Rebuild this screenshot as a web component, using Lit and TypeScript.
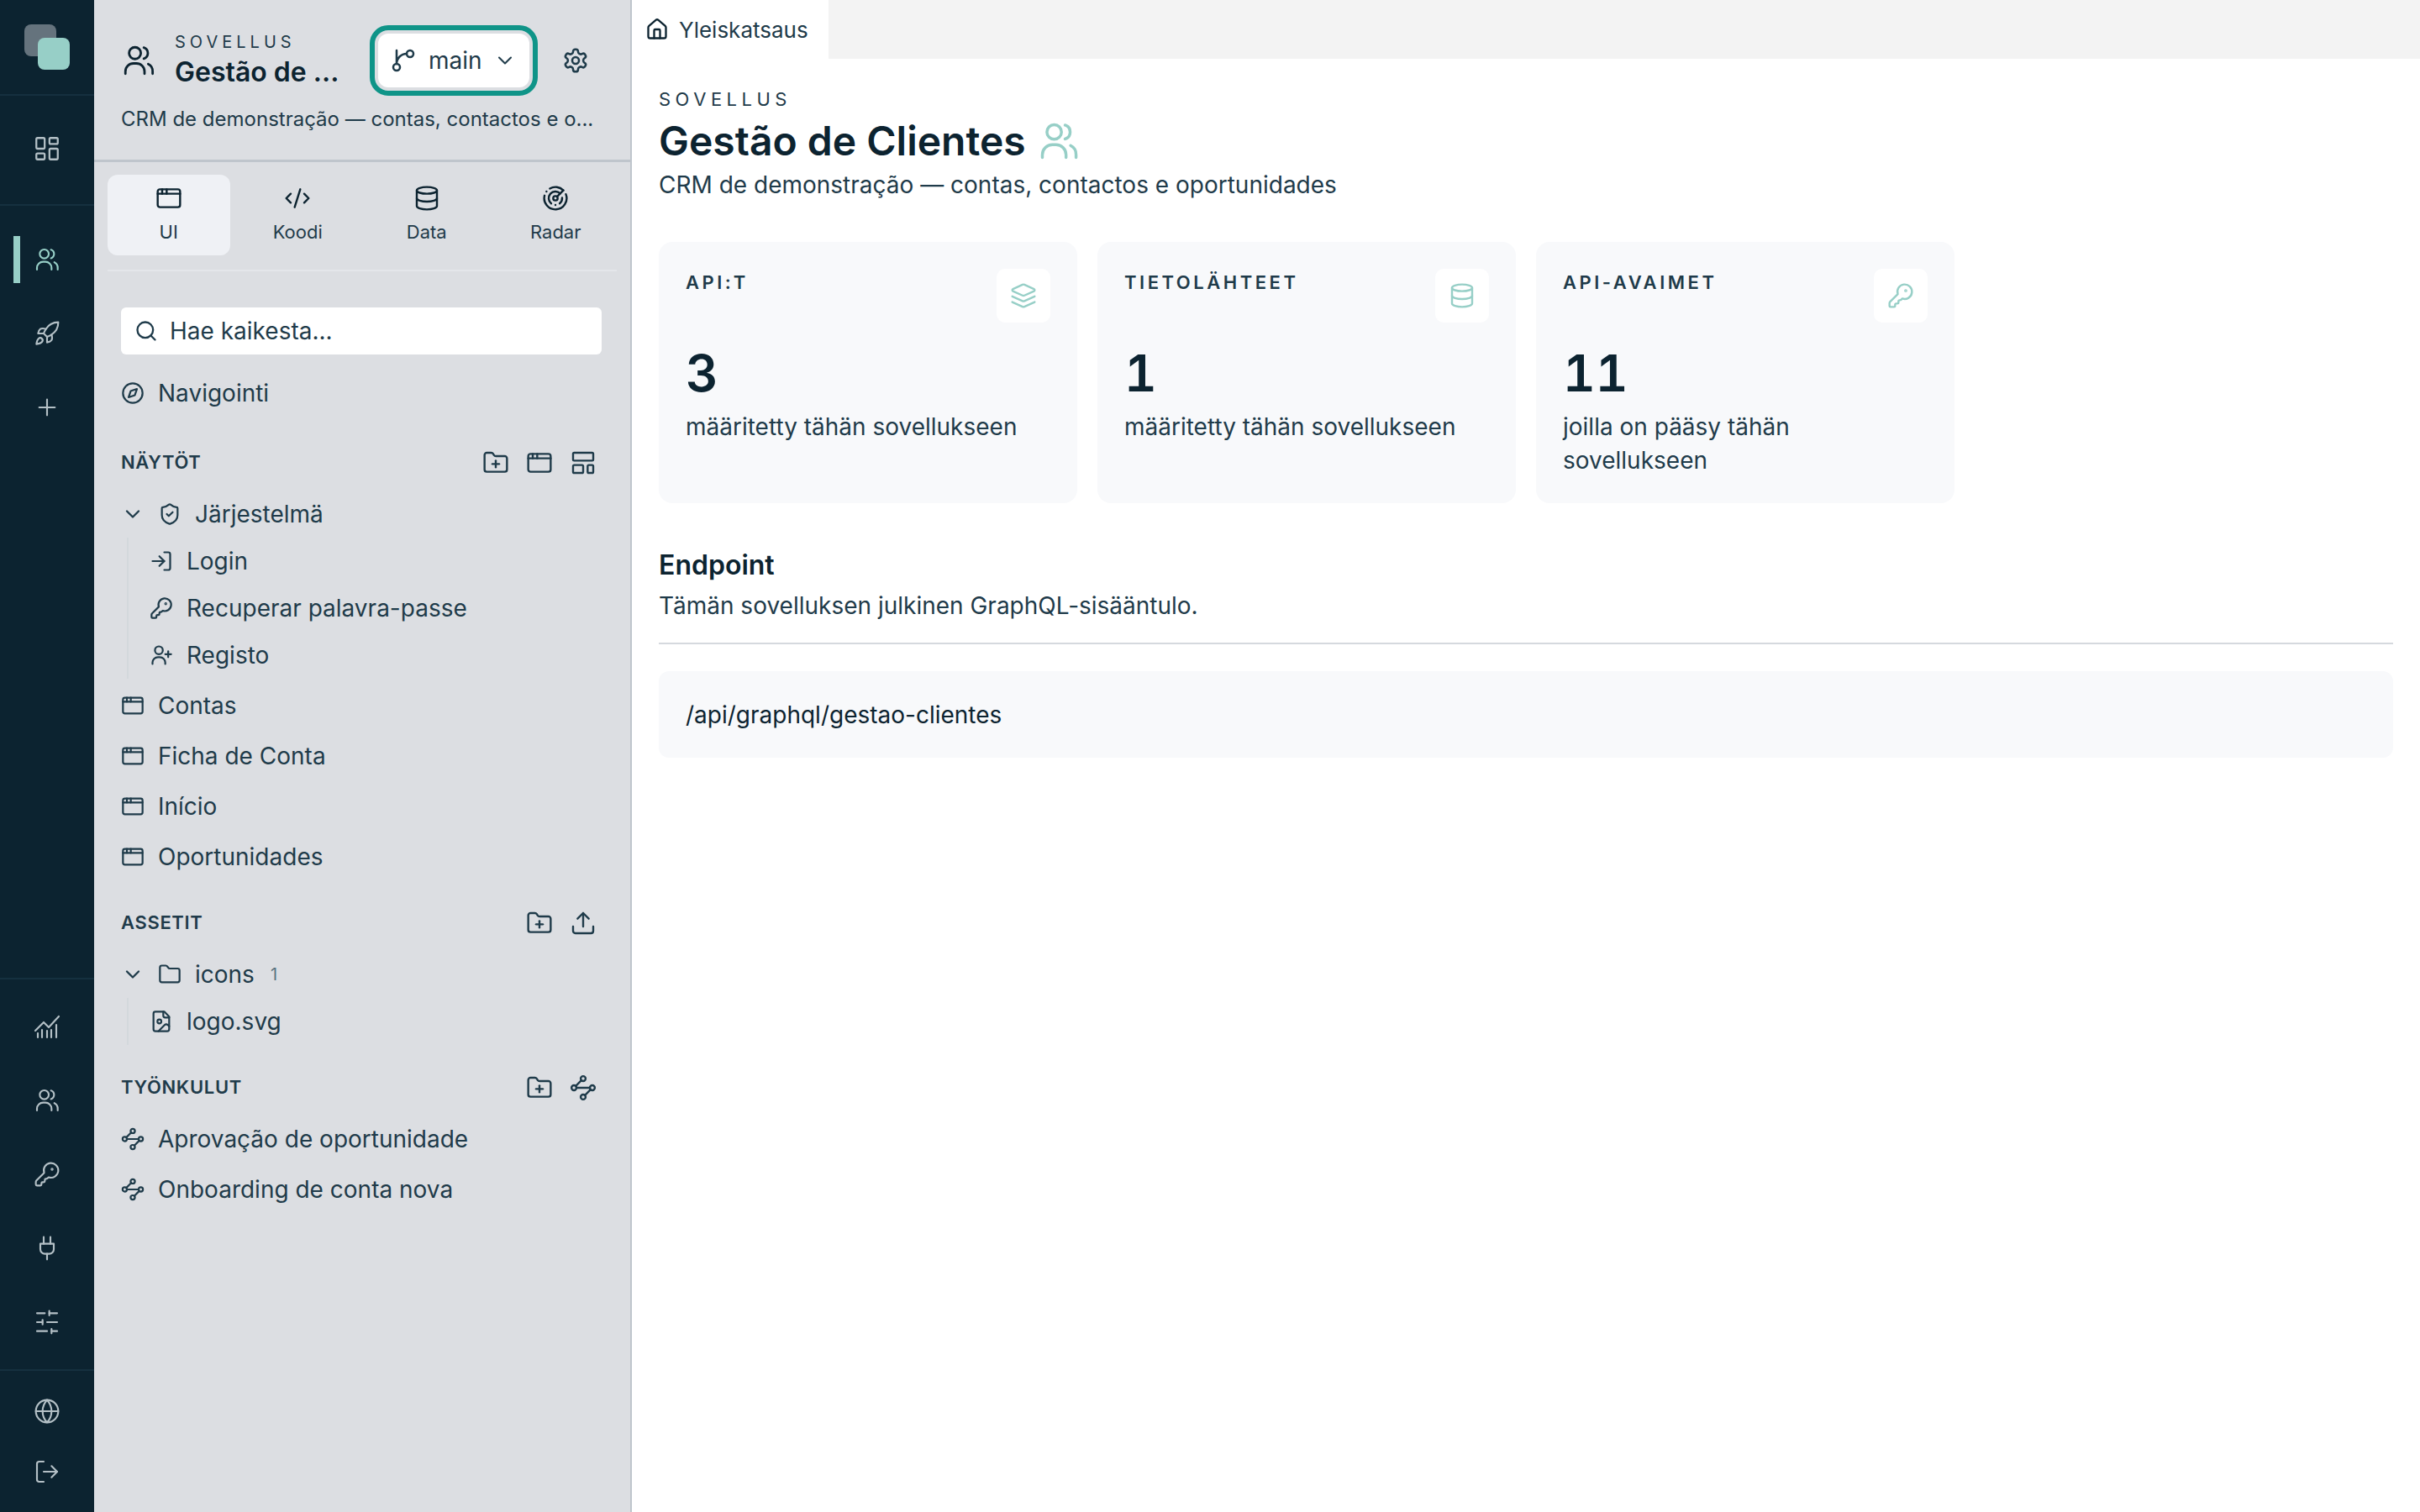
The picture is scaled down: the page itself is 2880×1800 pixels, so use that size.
import { LitElement, html, css, svg } from "lit";
import { customElement } from "lit/decorators.js";

const ICONS: Record<string, unknown> = {
  dashboard: svg`<rect x="3" y="3" width="7" height="9" rx="1"/><rect x="14" y="3" width="7" height="5" rx="1"/><rect x="14" y="12" width="7" height="9" rx="1"/><rect x="3" y="16" width="7" height="5" rx="1"/>`,
  users: svg`<circle cx="9.5" cy="7" r="4"/><path d="M3 21v-1.5a5.5 5.5 0 0 1 5.5-5.5h2a5.5 5.5 0 0 1 5.5 5.5V21"/><path d="M15.5 3.2a4 4 0 0 1 0 7.6"/><path d="M18.5 14.4A5.5 5.5 0 0 1 21.5 19.5V21"/>`,
  rocket: svg`<path d="M4.5 16.5c-1.5 1.26-2 5-2 5s3.74-.5 5-2c.71-.84.7-2.13-.09-2.91a2.18 2.18 0 0 0-2.91-.09z"/><path d="m12 15-3-3a22 22 0 0 1 2-3.95A12.88 12.88 0 0 1 22 2c0 2.72-.78 7.5-6 11a22.35 22.35 0 0 1-4 2z"/><path d="M9 12H4s.55-3.03 2-4c1.62-1.08 5 0 5 0"/><path d="M12 15v5s3.03-.55 4-2c1.08-1.62 0-5 0-5"/>`,
  plus: svg`<path d="M5 12h14"/><path d="M12 5v14"/>`,
  analytics: svg`<path d="M1.5 15.75 9 8.25l4.5 4.5L22.5 3"/><path d="M3.75 21.75V18"/><path d="M7.5 21.75V15"/><path d="M12 21.75V15.75"/><path d="M15.75 21.75V15"/><path d="M20.25 21.75V10.5"/>`,
  key: svg`<path d="M2.586 17.414A2 2 0 0 0 2 18.828V21a1 1 0 0 0 1 1h3a1 1 0 0 0 1-1v-1a1 1 0 0 1 1-1h1a1 1 0 0 0 1-1v-1a1 1 0 0 1 1-1h.172a2 2 0 0 0 1.414-.586l.814-.814a6.5 6.5 0 1 0-4-4z"/><circle cx="16.5" cy="7.5" r=".5"/>`,
  plug: svg`<path d="M12 22v-5"/><path d="M9 8V2"/><path d="M15 8V2"/><path d="M18 8v5a4 4 0 0 1-4 4h-4a4 4 0 0 1-4-4V8Z"/>`,
  sliders: svg`<path d="M21 4h-7"/><path d="M10 4H3"/><path d="M21 12h-9"/><path d="M8 12H3"/><path d="M21 20h-5"/><path d="M12 20H3"/><path d="M14 2v4"/><path d="M8 10v4"/><path d="M16 18v4"/>`,
  globe: svg`<circle cx="12" cy="12" r="10"/><path d="M12 2a14.5 14.5 0 0 0 0 20 14.5 14.5 0 0 0 0-20"/><path d="M2 12h20"/>`,
  logout: svg`<path d="M9 21H5a2 2 0 0 1-2-2V5a2 2 0 0 1 2-2h4"/><path d="m16 17 5-5-5-5"/><path d="M21 12H9"/>`,
  branch: svg`<path d="M15 6a9 9 0 0 0-9 9V3"/><circle cx="18" cy="6" r="3"/><circle cx="6" cy="18" r="3"/>`,
  chevron: svg`<path d="m6 9 6 6 6-6"/>`,
  gear: svg`<path d="M12.22 2h-.44a2 2 0 0 0-2 2v.18a2 2 0 0 1-1 1.73l-.43.25a2 2 0 0 1-2 0l-.15-.08a2 2 0 0 0-2.73.73l-.22.38a2 2 0 0 0 .73 2.73l.15.1a2 2 0 0 1 1 1.72v.51a2 2 0 0 1-1 1.74l-.15.09a2 2 0 0 0-.73 2.73l.22.38a2 2 0 0 0 2.73.73l.15-.08a2 2 0 0 1 2 0l.43.25a2 2 0 0 1 1 1.73V20a2 2 0 0 0 2 2h.44a2 2 0 0 0 2-2v-.18a2 2 0 0 1 1-1.73l.43-.25a2 2 0 0 1 2 0l.15.08a2 2 0 0 0 2.73-.73l.22-.39a2 2 0 0 0-.73-2.73l-.15-.08a2 2 0 0 1-1-1.74v-.5a2 2 0 0 1 1-1.74l.15-.09a2 2 0 0 0 .73-2.73l-.22-.38a2 2 0 0 0-2.73-.73l-.15.08a2 2 0 0 1-2 0l-.43-.25a2 2 0 0 1-1-1.73V4a2 2 0 0 0-2-2z"/><circle cx="12" cy="12" r="3"/>`,
  window: svg`<rect x="2" y="4" width="20" height="16" rx="2"/><path d="M10 4v4"/><path d="M2 8h20"/><path d="M6 4v4"/>`,
  code: svg`<path d="m18 16 4-4-4-4"/><path d="m6 8-4 4 4 4"/><path d="m14.5 4-5 16"/>`,
  database: svg`<ellipse cx="12" cy="5" rx="9" ry="3"/><path d="M3 5V19A9 3 0 0 0 21 19V5"/><path d="M3 12A9 3 0 0 0 21 12"/>`,
  radar: svg`<path d="M19.07 4.93A10 10 0 0 0 6.99 3.34"/><path d="M4 6h.01"/><path d="M2.29 9.62A10 10 0 1 0 21.31 8.35"/><path d="M16.24 7.76A6 6 0 1 0 8.23 16.67"/><path d="M12 18h.01"/><path d="M17.99 11.66A6 6 0 0 1 15.77 16.67"/><circle cx="12" cy="12" r="2"/><path d="m13.41 10.59 5.66-5.66"/>`,
  search: svg`<circle cx="11" cy="11" r="8"/><path d="m21 21-4.3-4.3"/>`,
  compass: svg`<circle cx="12" cy="12" r="10"/><path d="m16.24 7.76-2.12 6.36-6.36 2.12 2.12-6.36 6.36-2.12z"/>`,
  folderplus: svg`<path d="M12 10v6"/><path d="M9 13h6"/><path d="M20 20a2 2 0 0 0 2-2V8a2 2 0 0 0-2-2h-7.9a2 2 0 0 1-1.69-.9L9.6 3.9A2 2 0 0 0 7.93 3H4a2 2 0 0 0-2 2v13a2 2 0 0 0 2 2Z"/>`,
  folder: svg`<path d="M20 20a2 2 0 0 0 2-2V8a2 2 0 0 0-2-2h-7.9a2 2 0 0 1-1.69-.9L9.6 3.9A2 2 0 0 0 7.93 3H4a2 2 0 0 0-2 2v13a2 2 0 0 0 2 2Z"/>`,
  layout: svg`<rect x="3" y="3" width="18" height="7" rx="1"/><rect x="3" y="14" width="9" height="7" rx="1"/><rect x="16" y="14" width="5" height="7" rx="1"/>`,
  shield: svg`<path d="M20 13c0 5-3.5 7.5-7.66 8.95a1 1 0 0 1-.67-.01C7.5 20.5 4 18 4 13V6a1 1 0 0 1 1-1c2 0 4.5-1.2 6.24-2.72a1.17 1.17 0 0 1 1.52 0C14.51 3.81 17 5 19 5a1 1 0 0 1 1 1z"/><path d="m9 12 2 2 4-4"/>`,
  login: svg`<path d="M15 3h4a2 2 0 0 1 2 2v14a2 2 0 0 1-2 2h-4"/><path d="m10 17 5-5-5-5"/><path d="M15 12H3"/>`,
  userplus: svg`<circle cx="9.5" cy="7" r="4"/><path d="M3 21v-1.5a5.5 5.5 0 0 1 5.5-5.5h2a5.5 5.5 0 0 1 5.5 5.5V21"/><path d="M19 8v6"/><path d="M22 11h-6"/>`,
  upload: svg`<path d="M21 15v4a2 2 0 0 1-2 2H5a2 2 0 0 1-2-2v-4"/><path d="m17 8-5-5-5 5"/><path d="M12 3v12"/>`,
  fileimage: svg`<path d="M15 2H6a2 2 0 0 0-2 2v16a2 2 0 0 0 2 2h12a2 2 0 0 0 2-2V7Z"/><path d="M14 2v4a2 2 0 0 0 2 2h4"/><circle cx="10" cy="12" r="2"/><path d="m20 17-1.296-1.296a2.41 2.41 0 0 0-3.408 0L9 22"/>`,
  waypoints: svg`<circle cx="12" cy="3.8" r="2.2"/><path d="M10.4 5.4 5.4 10.4"/><circle cx="3.8" cy="12" r="2.2"/><path d="M6 12h12"/><circle cx="20.2" cy="12" r="2.2"/><path d="M13.6 18.6 18.6 13.6"/><circle cx="12" cy="20.2" r="2.2"/>`,
  layers: svg`<path d="m12.83 2.18a2 2 0 0 0-1.66 0L2.6 6.08a1 1 0 0 0 0 1.83l8.58 3.91a2 2 0 0 0 1.66 0l8.58-3.9a1 1 0 0 0 0-1.83Z"/><path d="m22 17.65-9.17 4.16a2 2 0 0 1-1.66 0L2 17.65"/><path d="m22 12.65-9.17 4.16a2 2 0 0 1-1.66 0L2 12.65"/>`,
  home: svg`<path d="M15 21v-8a1 1 0 0 0-1-1h-4a1 1 0 0 0-1 1v8"/><path d="M3 10a2 2 0 0 1 .709-1.528l7-5.999a2 2 0 0 1 2.582 0l7 5.999A2 2 0 0 1 21 10v9a2 2 0 0 1-2 2H5a2 2 0 0 1-2-2z"/>`,
};

const icon = (name: string, cls = "") =>
  html`<svg class="ic ${cls}" viewBox="0 0 24 24" fill="none" stroke="currentColor" stroke-width="2" stroke-linecap="round" stroke-linejoin="round">${ICONS[name]}</svg>`;

@customElement("app-root")
export class AppRoot extends LitElement {
  static styles = css`
    :host { display: flex; width: 2880px; height: 1800px; overflow: hidden; background: #fff; color: #0c2330; font-family: Inter, "Liberation Sans", sans-serif; }
    * { box-sizing: border-box; }
    .ic { display: block; flex: none; width: 28px; height: 28px; }

    .rail { width: 112px; flex: none; background: #0c2330; color: #b4c0c6; display: flex; flex-direction: column; }
    .logo { height: 112px; flex: none; position: relative; }
    .logo i { position: absolute; width: 38px; height: 38px; border-radius: 8px; }
    .logo .a { left: 29px; top: 29px; background: #65737d; }
    .logo .b { left: 45px; top: 45px; background: #97cfc7; }
    .rsec { border-top: 2px solid #15303f; flex: none; }
    .rsec.top { height: 131px; display: flex; align-items: center; justify-content: center; padding-bottom: 4px; }
    .rsec.top .ic { width: 34px; height: 34px; stroke-width: 1.6; }
    .rsec.apps { padding-top: 20px; flex: 1; }
    .rsec.tools { padding: 12px 0; }
    .rsec.foot { padding: 12px 0; }
    .ri { height: 88px; display: flex; align-items: center; justify-content: center; position: relative; }
    .foot .ri { height: 72px; }
    .ri .ic { width: 32px; height: 32px; stroke-width: 1.6; }
    .ri.on { color: #97cfc7; }
    .ri.on::before { content: ""; position: absolute; left: 16px; top: 16px; width: 8px; height: 56px; background: #97cfc7; }

    .panel { width: 640px; flex: none; background: #dcdee2; border-right: 2px solid #bfc5cc; color: #1f3b4a; display: flex; flex-direction: column; }
    .phead { height: 193px; flex: none; border-bottom: 3px solid #bfc5cc; padding: 30px 32px 0 34px; }
    .prow { display: flex; align-items: center; height: 83px; }
    .pic { width: 42px; height: 42px; color: #0c2330; stroke-width: 1.6; margin-left: -2px; }
    .ptext { margin-left: 22px; width: 200px; flex: none; }
    .eyebrow { font-size: 20px; letter-spacing: 0.25em; line-height: 26px; color: #1f3b4a; }
    .ptitle { font-size: 32px; font-weight: 600; line-height: 42px; color: #0c2330; white-space: nowrap; margin-top: 2px; }
    .branch { margin-left: 42px; width: 180px; height: 64px; flex: none; background: #fff; border-radius: 12px; outline: 6px solid #0f9488; outline-offset: 4px; display: flex; align-items: center; padding-left: 14px; font-size: 28px; color: #1f3b4a; }
    .branch .ic { width: 32px; height: 32px; stroke-width: 1.9; }
    .branch span { margin: 0 13px 0 14px; }
    .branch .chev { width: 28px; height: 28px; stroke-width: 1.8; }
    .gear { margin-left: 39px; width: 32px; height: 32px; color: #1f3b4a; stroke-width: 1.9; }
    .pdesc { margin-top: 12px; margin-left: -2px; font-size: 24px; line-height: 34px; white-space: nowrap; }

    .tabs { margin: 15px 16px 0; height: 115px; padding-bottom: 17px; border-bottom: 2px solid #e4e6ea; display: grid; grid-template-columns: repeat(4, 1fr); gap: 8px; flex: none; }
    .tab { border-radius: 12px; display: flex; flex-direction: column; align-items: center; padding-top: 12px; font-size: 22px; line-height: 30px; gap: 9px; }
    .tab.on { background: #eff1f5; }
    .tab .ic { width: 32px; height: 32px; stroke-width: 1.8; color: #0c2330; }

    .tree { padding: 43px 34px 0 32px; flex: 1; }
    .search { width: 572px; height: 56px; background: #fff; border-radius: 6px; display: flex; align-items: center; padding-left: 16px; gap: 14px; font-size: 28px; }
    .search .ic { width: 28px; height: 28px; }
    .row { height: 60px; display: flex; align-items: center; gap: 16px; font-size: 28px; white-space: nowrap; margin-left: 1px; }
    .row.top { margin-top: 16px; }
    .row .ic { width: 28px; height: 28px; stroke-width: 1.9; margin-left: -1px; }
    .group { height: 56px; display: flex; align-items: center; font-size: 28px; margin-top: 12px; }
    .group .chev { width: 28px; height: 28px; margin-right: 16px; }
    .group .gi { width: 28px; height: 28px; margin-right: 16px; stroke-width: 1.9; }
    .count { font-size: 20px; color: #5b7380; margin-left: 19px; }
    .kids { margin: 0 0 0 7px; border-left: 2px solid #d3d8dc; padding-left: 25px; }
    .kids.mb { margin-bottom: 2px; }
    .kid { height: 56px; display: flex; align-items: center; gap: 16px; font-size: 28px; white-space: nowrap; }
    .kid .ic { width: 28px; height: 28px; stroke-width: 1.9; }
    .sh { height: 44px; display: flex; align-items: center; justify-content: space-between; font-size: 22px; font-weight: 600; letter-spacing: 0.03em; margin-top: 30px; padding-right: 6px; }
    .sh.assets { margin-top: 26px; }
    .sh.flows { margin-top: 28px; }
    .sh div { display: flex; gap: 20px; }
    .sh .ic { width: 32px; height: 32px; stroke-width: 1.8; margin-top: 2px; }
    .row.after { margin-top: 10px; }

    .main { flex: 1; min-width: 0; display: flex; flex-direction: column; }
    .tabbar { height: 70px; flex: none; background: #f3f3f3; display: flex; }
    .doc { width: 234px; background: #fff; display: flex; align-items: center; padding-left: 16px; gap: 12px; font-size: 26px; color: #1f3b4a; }
    .doc .ic { color: #0c2330; }
    .content { padding: 32px 32px 0; }
    .ceyebrow { font-size: 22px; letter-spacing: 0.25em; line-height: 32px; color: #1f3b4a; }
    .h1 { display: flex; align-items: center; gap: 13px; font-size: 48px; font-weight: 600; line-height: 66px; margin-top: 1px; }
    .h1 .ic { width: 52px; height: 52px; color: #97cfc7; stroke-width: 1.6; }
    .sub { font-size: 28px; line-height: 38px; color: #1f3b4a; }
    .cards { margin-top: 49px; display: flex; gap: 24px; }
    .card { width: 498px; height: 311px; background: #f8f9fb; border-radius: 16px; padding: 32px; position: relative; }
    .label { font-size: 22px; font-weight: 600; letter-spacing: 0.16em; line-height: 32px; color: #1f3b4a; }
    .tile { position: absolute; right: 32px; top: 32px; width: 64px; height: 64px; background: #fff; border-radius: 10px; display: flex; align-items: center; justify-content: center; color: #97cfc7; }
    .tile .ic { width: 32px; height: 32px; stroke-width: 1.8; }
    .num { margin-top: 56px; font-size: 60px; font-weight: 600; line-height: 72px; color: #0c2330; font-variant-numeric: tabular-nums; }
    .cdesc { margin-top: 8px; font-size: 28px; line-height: 40px; color: #1f3b4a; max-width: 340px; }
    .card.wide .cdesc { max-width: none; }
    .h2 { margin-top: 52px; font-size: 32px; font-weight: 600; line-height: 44px; }
    .sub2 { font-size: 28px; line-height: 40px; margin-top: 6px; color: #1f3b4a; }
    .hr { height: 2px; background: #d5d9de; margin-top: 24px; }
    .codebox { margin-top: 32px; height: 103px; background: #f8f9fb; border-radius: 12px; padding-left: 32px; display: flex; align-items: center; font-size: 28px; color: #0c2330; }
  `;

  private railItem(name: string, on = false) {
    return html`<div class="ri ${on ? "on" : ""}">${icon(name)}</div>`;
  }

  private card(label: string, ic: string, num: string, desc: string, wide = true) {
    return html`<div class="card ${wide ? "wide" : ""}">
      <div class="label">${label}</div>
      <div class="tile">${icon(ic)}</div>
      <div class="num">${num}</div>
      <div class="cdesc">${desc}</div>
    </div>`;
  }

  render() {
    const kid = (i: string, t: string) => html`<div class="kid">${icon(i)}<span>${t}</span></div>`;
    const row = (i: string, t: string, c = "") => html`<div class="row ${c}">${icon(i)}<span>${t}</span></div>`;
    return html`
      <nav class="rail">
        <div class="logo"><i class="a"></i><i class="b"></i></div>
        <div class="rsec top">${icon("dashboard")}</div>
        <div class="rsec apps">${this.railItem("users", true)}${this.railItem("rocket")}${this.railItem("plus")}</div>
        <div class="rsec tools">${this.railItem("analytics")}${this.railItem("users")}${this.railItem("key")}${this.railItem("plug")}${this.railItem("sliders")}</div>
        <div class="rsec foot">${this.railItem("globe")}${this.railItem("logout")}</div>
      </nav>
      <aside class="panel">
        <header class="phead">
          <div class="prow">
            ${icon("users", "pic")}
            <div class="ptext">
              <div class="eyebrow">SOVELLUS</div>
              <div class="ptitle">Gestão de ...</div>
            </div>
            <div class="branch">${icon("branch")}<span>main</span>${icon("chevron", "chev")}</div>
            ${icon("gear", "gear")}
          </div>
          <div class="pdesc">CRM de demonstração — contas, contactos e o...</div>
        </header>
        <div class="tabs">
          <div class="tab on">${icon("window")}UI</div>
          <div class="tab">${icon("code")}Koodi</div>
          <div class="tab">${icon("database")}Data</div>
          <div class="tab">${icon("radar")}Radar</div>
        </div>
        <div class="tree">
          <div class="search">${icon("search")}<span>Hae kaikesta...</span></div>
          ${row("compass", "Navigointi", "top")}
          <div class="sh"><span>NÄYTÖT</span><div>${icon("folderplus")}${icon("window")}${icon("layout")}</div></div>
          <div class="group">${icon("chevron", "chev")}${icon("shield", "gi")}<span>Järjestelmä</span></div>
          <div class="kids mb">${kid("login", "Login")}${kid("key", "Recuperar palavra-passe")}${kid("userplus", "Registo")}</div>
          ${row("window", "Contas")}${row("window", "Ficha de Conta")}${row("window", "Início")}${row("window", "Oportunidades")}
          <div class="sh assets"><span>ASSETIT</span><div>${icon("folderplus")}${icon("upload")}</div></div>
          <div class="group">${icon("chevron", "chev")}${icon("folder", "gi")}<span>icons</span><span class="count">1</span></div>
          <div class="kids">${kid("fileimage", "logo.svg")}</div>
          <div class="sh flows"><span>TYÖNKULUT</span><div>${icon("folderplus")}${icon("waypoints")}</div></div>
          ${row("waypoints", "Aprovação de oportunidade", "after")}${row("waypoints", "Onboarding de conta nova")}
        </div>
      </aside>
      <main class="main">
        <div class="tabbar"><div class="doc">${icon("home")}<span>Yleiskatsaus</span></div></div>
        <div class="content">
          <div class="ceyebrow">SOVELLUS</div>
          <div class="h1"><span>Gestão de Clientes</span>${icon("users")}</div>
          <div class="sub">CRM de demonstração — contas, contactos e oportunidades</div>
          <div class="cards">
            ${this.card("API:T", "layers", "3", "määritetty tähän sovellukseen")}
            ${this.card("TIETOLÄHTEET", "database", "1", "määritetty tähän sovellukseen")}
            ${this.card("API-AVAIMET", "key", "11", "joilla on pääsy tähän sovellukseen", false)}
          </div>
          <div class="h2">Endpoint</div>
          <div class="sub2">Tämän sovelluksen julkinen GraphQL-sisääntulo.</div>
          <div class="hr"></div>
          <div class="codebox">/api/graphql/gestao-clientes</div>
        </div>
      </main>
    `;
  }
}
